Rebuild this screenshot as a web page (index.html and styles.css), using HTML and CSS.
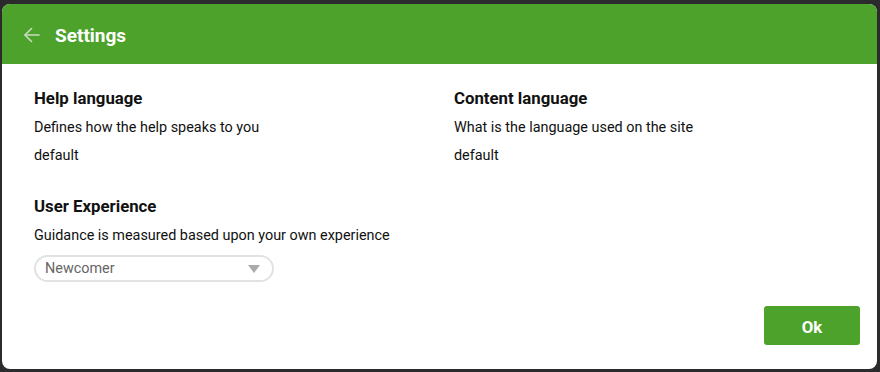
FILE: index.html
```html
<!DOCTYPE html>
<html lang="en">
<head>
    <meta charset="UTF-8">
    <meta name="viewport" content="width=device-width, initial-scale=1.0">
    <title>Settings</title>
    <link rel="stylesheet" href="styles.css">
</head>
<body>
    <div class="dialog">
        <header class="dialog-header">
            <button type="button" class="back-button" aria-label="Back">
                <svg width="18" height="18" viewBox="0 0 18 18" fill="none" stroke="currentColor" stroke-width="1.6" stroke-linecap="round" stroke-linejoin="round">
                    <path d="M16 9H2"/>
                    <path d="M8.5 2.5L2 9l6.5 6.5"/>
                </svg>
            </button>
            <h1>Settings</h1>
        </header>

        <div class="dialog-body">
            <div class="setting">
                <h3>Help language</h3>
                <p>Defines how the help speaks to you</p>
                <p>default</p>
            </div>
            <div class="setting">
                <h3>Content language</h3>
                <p>What is the language used on the site</p>
                <p>default</p>
            </div>
            <div class="setting">
                <h3>User Experience</h3>
                <p>Guidance is measured based upon your own experience</p>
                <div class="select">
                    <span>Newcomer</span>
                    <span class="caret"></span>
                </div>
            </div>
        </div>

        <div class="dialog-footer">
            <button type="button" class="ok-button">Ok</button>
        </div>
    </div>
</body>
</html>
```

FILE: styles.css
```css
* {
    margin: 0;
    padding: 0;
    box-sizing: border-box;
    font-family: Roboto, 'Liberation Sans', Arial, sans-serif;
}

body {
    background-color: #2b2b2e;
    color: #111;
}

.dialog {
    width: 875px;
    height: 365px;
    margin: 4px 0 0 2px;
    background-color: #fff;
    border-radius: 8px;
    overflow: hidden;
    display: flex;
    flex-direction: column;
}

.dialog-header {
    height: 60px;
    background-color: #4ca22b;
    display: flex;
    align-items: center;
    padding-left: 21px;
    gap: 14px;
}

.back-button {
    background: none;
    border: none;
    color: #c9dcc1;
    display: flex;
    align-items: center;
    margin-top: 2px;
    cursor: pointer;
}

.dialog-header h1 {
    color: #fff;
    font-size: 19px;
    font-weight: 700;
    margin-top: 2px;
}

.dialog-body {
    flex: 1;
    display: grid;
    grid-template-columns: 420px 420px;
    align-content: start;
    row-gap: 29px;
    padding: 23px 32px 0;
}

.setting h3 {
    font-size: 16.8px;
    font-weight: 700;
    line-height: 22px;
}

.setting p {
    font-size: 14.4px;
    line-height: 20px;
    margin-top: 9px;
}

.setting p + p {
    margin-top: 8px;
}

.select {
    width: 240px;
    height: 27px;
    margin-top: 9px;
    border: 2px solid #e2e2e2;
    border-radius: 14px;
    display: flex;
    align-items: center;
    justify-content: space-between;
    padding: 0 12px 0 9px;
    font-size: 14.4px;
    color: #666;
}

.caret {
    width: 0;
    height: 0;
    border-left: 6px solid transparent;
    border-right: 6px solid transparent;
    border-top: 8px solid #aaa;
}

.dialog-footer {
    display: flex;
    justify-content: flex-end;
    padding: 0 17px 24px 0;
}

.ok-button {
    width: 96px;
    height: 39px;
    background-color: #4ca22b;
    color: #fff;
    border: none;
    border-radius: 3px;
    font-size: 16.8px;
    font-weight: 700;
    padding-top: 2px;
    cursor: pointer;
}
```
